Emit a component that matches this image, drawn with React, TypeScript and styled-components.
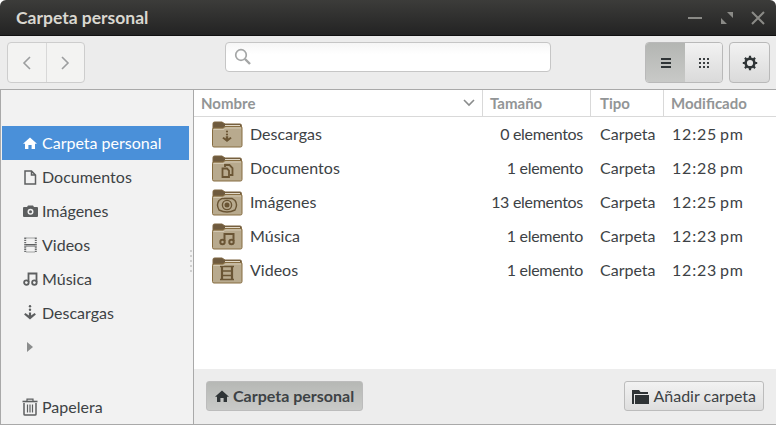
import React from "react";
import styled, { createGlobalStyle } from "styled-components";

const GlobalStyle = createGlobalStyle`
  html, body {
    margin: 0;
    padding: 0;
    background: #ffffff;
  }
  * {
    box-sizing: border-box;
  }
`;

const FolderBadge = ({ kind }: { kind: string }) => {
  const c = "#6a5534";
  return (
    <svg width="32" height="28" viewBox="0 0 32 28">
      <path d="M2 3.5 Q2 2 3.5 2 H11 L14 4 H29 Q30.5 4 30.5 5.5 V12 H2Z" fill="#6e5a3e" stroke="#7d6540" />
      <rect x="14" y="5" width="15" height="2" fill="#e2d9c8" />
      <path d="M1.5 9.5 Q1.5 8 3 8 H12 L14 6.5 H30 Q31 6.5 31 8 V25.5 Q31 27 29.5 27 H3 Q1.5 27 1.5 25.5Z" fill="#b8aa8e" stroke="#866c40" />
      <path d="M2.5 9.5 H13 L14.5 8 H30" fill="none" stroke="#d3c8b2" />
      {kind === "download" && (
        <g fill={c}>
          <circle cx="16" cy="11.5" r="1.1" />
          <circle cx="16" cy="14.5" r="1.1" />
          <path d="M14.8 16.3h2.4v2.2l2.2-1.6 1.3 1.3-4.7 3.8-4.7-3.8 1.3-1.3 2.2 1.6z" />
        </g>
      )}
      {kind === "doc" && (
        <g fill="none" stroke={c} strokeWidth="1.8">
          <path d="M14 13V11H18.5L21.5 14V21H19" />
          <path d="M11.5 14.5H16L18 16.5V23H11.5Z" />
        </g>
      )}
      {kind === "photo" && (
        <g fill="none" stroke={c} strokeWidth="1.4">
          <path d="M8 12.5 L11 10.5 H21 L24 12.5 Q27 16.5 24 22 Q16 26 8 22 Q5 16.5 8 12.5Z" />
          <circle cx="16" cy="17" r="4.6" />
          <circle cx="16" cy="17" r="1.8" fill={c} />
        </g>
      )}
      {kind === "music" && (
        <g fill="none" stroke={c} strokeWidth="2">
          <path d="M13.5 19V12H22.5V19" />
          <circle cx="11.5" cy="20" r="2.2" />
          <circle cx="20.5" cy="20" r="2.2" />
        </g>
      )}
      {kind === "video" && (
        <g fill="none" stroke={c}>
          <path d="M11 10V24M21 10V24" strokeWidth="2.2" />
          <path d="M9 10.5H23M9 23.5H23M11 15H21M11 19.5H21" strokeWidth="1.5" />
        </g>
      )}
    </svg>
  );
};

const HomeIcon = ({ color }: { color: string }) => (
  <svg width="14" height="14" viewBox="0 0 14 14">
    <path d="M7 1.5 L14 7.8 H12 V13 H8.6 V9 H5.4 V13 H2 V7.8 H0 Z" fill={color} />
  </svg>
);

const sideIcons: Record<string, React.ReactNode> = {
  home: <HomeIcon color="#ffffff" />,
  doc: (
    <svg width="14" height="15" viewBox="0 0 14 15">
      <path d="M2 1H8.5L12.5 5V14H2Z M8.5 1V5H12.5" fill="none" stroke="#5d5f60" strokeWidth="1.5" />
    </svg>
  ),
  photo: (
    <svg width="15" height="14" viewBox="0 0 15 14">
      <path fillRule="evenodd" d="M1 3H4L5 1.5H10L11 3H14Q15 3 15 4V12Q15 13 14 13H1Q0 13 0 12V4Q0 3 1 3Z M7.5 4.8A3 3 0 1 0 7.5 10.8A3 3 0 1 0 7.5 4.8Z" fill="#5d5f60" />
      <circle cx="7.5" cy="7.8" r="1.5" fill="#5d5f60" />
    </svg>
  ),
  video: (
    <svg width="15" height="16" viewBox="0 0 15 16">
      <path d="M3 7.5H12M3 9H12" fill="none" stroke="#5d5f60" strokeWidth="1" />
      <path d="M3 1H12M3 15H12" fill="none" stroke="#a0a2a2" strokeWidth="1" />
      <path d="M2.2 0.5V15.5M12.8 0.5V15.5" fill="none" stroke="#6b6d6e" strokeWidth="2" strokeDasharray="1.4 0.8" />
    </svg>
  ),
  music: (
    <svg width="15" height="14" viewBox="0 0 15 14">
      <g fill="none" stroke="#5d5f60" strokeWidth="1.8">
        <path d="M5.5 10V1.5H13.5V10" />
        <circle cx="3.4" cy="10.6" r="2.3" />
        <circle cx="11.4" cy="10.6" r="2.3" />
      </g>
    </svg>
  ),
  download: (
    <svg width="14" height="16" viewBox="0 0 14 16">
      <g fill="#5d5f60">
        <circle cx="7" cy="1.3" r="1.2" />
        <circle cx="7" cy="4.8" r="1.2" />
        <path d="M5.9 7.4H8.1V10.6L11.6 8 12.9 9.4 7 14.6 1.1 9.4 2.4 8 5.9 10.6Z" />
      </g>
    </svg>
  ),
  trash: (
    <svg width="16" height="18" viewBox="0 0 16 18">
      <g fill="none" stroke="#5d5f60">
        <path d="M0.5 3.5H15.5" strokeWidth="1.6" />
        <path d="M5 3V1.2H11V3" strokeWidth="1.2" />
        <path d="M2 5V16.2Q2 17 3 17H13Q14 17 14 16.2V5" strokeWidth="1.5" />
        <path d="M5.5 6.5V14.5M8 6.5V14.5M10.5 6.5V14.5" strokeWidth="1.2" />
      </g>
    </svg>
  ),
};

const places = [
  { icon: "home", label: "Carpeta personal", active: true },
  { icon: "doc", label: "Documentos" },
  { icon: "photo", label: "Imágenes" },
  { icon: "video", label: "Videos" },
  { icon: "music", label: "Música" },
  { icon: "download", label: "Descargas" },
];

const files = [
  { icon: "download", name: "Descargas", size: "0 elementos", time: "12:25 pm" },
  { icon: "doc", name: "Documentos", size: "1 elemento", time: "12:28 pm" },
  { icon: "photo", name: "Imágenes", size: "13 elementos", time: "12:25 pm" },
  { icon: "music", name: "Música", size: "1 elemento", time: "12:23 pm" },
  { icon: "video", name: "Videos", size: "1 elemento", time: "12:23 pm" },
];

const App = () => {
  return (
    <Win>
      <GlobalStyle />
      <TitleBar>
        <Title>Carpeta personal</Title>
        <WinButtons>
          <svg width="16" height="16" viewBox="0 0 16 16">
            <rect x="1" y="7" width="14" height="2" fill="#8a8a86" />
          </svg>
          <svg width="14" height="14" viewBox="0 0 14 14">
            <path d="M7 1H13V7ZM1 7L7 13H1Z" fill="#8a8a86" />
          </svg>
          <svg width="14" height="14" viewBox="0 0 14 14">
            <path d="M1 1L13 13M13 1L1 13" stroke="#8a8a86" strokeWidth="2" />
          </svg>
        </WinButtons>
      </TitleBar>

      <ToolBar>
        <NavGroup>
          <NavButton>
            <svg width="10" height="14" viewBox="0 0 10 14">
              <path d="M8 1L2 7L8 13" fill="none" stroke="#9c9e9f" strokeWidth="1.6" />
            </svg>
          </NavButton>
          <NavButton>
            <svg width="10" height="14" viewBox="0 0 10 14">
              <path d="M2 1L8 7L2 13" fill="none" stroke="#9c9e9f" strokeWidth="1.6" />
            </svg>
          </NavButton>
        </NavGroup>
        <SearchBox>
          <svg width="18" height="18" viewBox="0 0 18 18">
            <circle cx="7" cy="7" r="5.3" fill="none" stroke="#a4a6a6" strokeWidth="1.7" />
            <path d="M11 11L16 16" stroke="#a4a6a6" strokeWidth="2.4" />
          </svg>
        </SearchBox>
        <ViewGroup>
          <ViewButton $on>
            <svg width="10" height="10" viewBox="0 0 10 10">
              <path d="M0 0H10V2H0ZM0 4H10V6H0ZM0 8H10V10H0Z" fill="#2f3436" />
            </svg>
          </ViewButton>
          <ViewButton>
            <svg width="10" height="10" viewBox="0 0 10 10" fill="#3b3f41">
              <path d="M0 0h2v2H0zM4 0h2v2H4zM8 0h2v2H8zM0 4h2v2H0zM4 4h2v2H4zM8 4h2v2H8zM0 8h2v2H0zM4 8h2v2H4zM8 8h2v2H8z" />
            </svg>
          </ViewButton>
        </ViewGroup>
        <GearButton>
          <svg width="16" height="16" viewBox="0 0 16 16">
            <circle cx="8" cy="8" r="4.4" fill="none" stroke="#2f3436" strokeWidth="2.6" />
            <path d="M8 0.8V3M8 13V15.2M0.8 8H3M13 8H15.2M2.9 2.9L4.5 4.5M11.5 11.5L13.1 13.1M13.1 2.9L11.5 4.5M4.5 11.5L2.9 13.1" stroke="#2f3436" strokeWidth="2.2" />
          </svg>
        </GearButton>
      </ToolBar>

      <Body>
        <Sidebar>
          {places.map((p) => (
            <Place key={p.label} $active={p.active}>
              <PlaceIcon>{sideIcons[p.icon]}</PlaceIcon>
              <Label>{p.label}</Label>
            </Place>
          ))}
          <Expander>
            <svg width="6" height="10" viewBox="0 0 6 10">
              <path d="M0 0L6 5L0 10Z" fill="#8b8d8d" />
            </svg>
          </Expander>
          <Trash>
            <PlaceIcon>{sideIcons.trash}</PlaceIcon>
            <Label>Papelera</Label>
          </Trash>
          <Grip />
        </Sidebar>

        <Main>
          <HeaderRow>
            <HeadCell>
              Nombre
              <svg width="12" height="8" viewBox="0 0 12 8">
                <path d="M1 1L6 6L11 1" fill="none" stroke="#8a8c8c" strokeWidth="1.6" />
              </svg>
            </HeadCell>
            <HeadCell>Tamaño</HeadCell>
            <HeadCell $inset={9}>Tipo</HeadCell>
            <HeadCell>Modificado</HeadCell>
          </HeaderRow>
          <FileList>
            {files.map((f) => (
              <FileRow key={f.name}>
                <NameCell>
                  <FolderBadge kind={f.icon} />
                  <Label>{f.name}</Label>
                </NameCell>
                <SizeCell>{f.size}</SizeCell>
                <TypeCell>Carpeta</TypeCell>
                <TimeCell>{f.time}</TimeCell>
              </FileRow>
            ))}
          </FileList>
          <Footer>
            <FooterButton $pressed>
              <HomeIcon color="#2f3436" />
              <Label>Carpeta personal</Label>
            </FooterButton>
            <FooterButton>
              <svg width="17" height="15" viewBox="0 0 17 15">
                <path d="M0 1H7L8.5 3H16V5H2V15H0Z M3 6H17V15H3Z" fill="#2f3436" />
              </svg>
              <Label>Añadir carpeta</Label>
            </FooterButton>
          </Footer>
        </Main>
      </Body>
    </Win>
  );
};

export default App;

const Win = styled.div`
  width: 776px;
  height: 425px;
  display: flex;
  flex-direction: column;
  overflow: hidden;
  font-family: "Lato", "Liberation Sans", sans-serif;
  font-size: 16px;
  color: #3d4245;
  background: #ffffff;
  border-radius: 6px 6px 0 0;
`;

const Label = styled.span`
  margin-bottom: 2px;
`;

const TitleBar = styled.div`
  height: 36px;
  flex: none;
  display: flex;
  align-items: center;
  justify-content: space-between;
  padding: 0 11px 0 16px;
  background: linear-gradient(#3c3c3a, #232323);
  border-bottom: 1px solid #111111;
`;

const Title = styled.div`
  font-size: 17.5px;
  font-weight: 700;
  color: #d9d7d0;
`;

const WinButtons = styled.div`
  display: flex;
  align-items: center;
  gap: 17px;
`;

const ToolBar = styled.div`
  height: 54px;
  flex: none;
  display: flex;
  align-items: flex-start;
  padding: 6px 6px 0 7px;
  background: #ececec;
  border-bottom: 1px solid #a9a9a9;
`;

const NavGroup = styled.div`
  width: 78px;
  height: 41px;
  display: flex;
  border: 1px solid #cdcdcd;
  border-radius: 4px;
  background: #f3f3f2;
`;

const NavButton = styled.div`
  flex: 1;
  display: flex;
  align-items: center;
  justify-content: center;
  & + & {
    border-left: 1px solid #d8d8d8;
  }
`;

const SearchBox = styled.div`
  width: 326px;
  height: 30px;
  margin-left: 140px;
  display: flex;
  align-items: center;
  padding-left: 8px;
  background: linear-gradient(#f6f6f6, #ffffff 40%);
  border: 1px solid #c6c6c6;
  border-radius: 4px;
`;

const ViewGroup = styled.div`
  width: 78px;
  height: 41px;
  margin-left: 94px;
  display: flex;
  border: 1px solid #b9b9b9;
  border-radius: 4px;
  overflow: hidden;
`;

const ViewButton = styled.div<{ $on?: boolean }>`
  flex: none;
  width: ${({ $on }) => ($on ? "39px" : "38px")};
  display: flex;
  align-items: center;
  justify-content: center;
  background: ${({ $on }) =>
    $on ? "linear-gradient(#b4b6b3, #c8c9c7)" : "linear-gradient(#f2f2f2, #dadada)"};
`;

const GearButton = styled.div`
  width: 41px;
  height: 41px;
  margin-left: 6px;
  display: flex;
  align-items: center;
  justify-content: center;
  border: 1px solid #b9b9b9;
  border-radius: 4px;
  background: linear-gradient(#f2f2f2, #dadada);
`;

const Body = styled.div`
  flex: 1;
  display: flex;
  min-height: 0;
`;

const Sidebar = styled.div`
  position: relative;
  width: 194px;
  flex: none;
  display: flex;
  flex-direction: column;
  padding: 36px 4px 0 1px;
  background: #f2f2f2;
  border-left: 1px solid #a9a9a9;
  border-right: 1px solid #a9a9a9;
  border-bottom: 1px solid #a9a9a9;
`;

const Place = styled.div<{ $active?: boolean }>`
  height: 34px;
  flex: none;
  display: flex;
  align-items: center;
  padding-left: 20px;
  color: ${({ $active }) => ($active ? "#ffffff" : "#3d4245")};
  background: ${({ $active }) => ($active ? "#4a90d9" : "transparent")};
`;

const PlaceIcon = styled.span`
  width: 16px;
  margin-right: 4px;
  display: flex;
  justify-content: center;
`;

const Expander = styled.div`
  height: 34px;
  flex: none;
  display: flex;
  align-items: center;
  padding-left: 25px;
`;

const Trash = styled(Place)`
  margin-top: auto;
`;

const Grip = styled.div`
  position: absolute;
  right: 1px;
  top: 160px;
  width: 2px;
  height: 25px;
  background: repeating-linear-gradient(#cfcfcf 0 2px, transparent 2px 5px);
`;

const Main = styled.div`
  flex: 1;
  min-width: 0;
  display: flex;
  flex-direction: column;
`;

const HeaderRow = styled.div`
  height: 27px;
  flex: none;
  display: grid;
  grid-template-columns: 289px 108px 73px 1fr;
  border-bottom: 1px solid #d9d9d9;
  color: #929596;
`;

const HeadCell = styled.div<{ $inset?: number }>`
  display: flex;
  align-items: center;
  justify-content: space-between;
  padding: 0 7px 0 ${({ $inset }) => $inset ?? 7}px;
  border-right: 1px solid #d9d9d9;
  font-size: 15px;
  font-weight: 700;
  &:last-child {
    border-right: none;
  }
`;

const FileList = styled.div`
  flex: 1;
  background: #ffffff;
`;

const FileRow = styled.div`
  height: 34px;
  display: grid;
  grid-template-columns: 200px 189px 89px 1fr;
  align-items: center;
`;

const NameCell = styled.div`
  display: flex;
  align-items: center;
  gap: 7px;
  padding-left: 17px;
`;

const SizeCell = styled.span`
  margin-bottom: 2px;
  text-align: right;
  letter-spacing: -0.3px;
`;

const TypeCell = styled.span`
  margin-bottom: 2px;
  padding-left: 17px;
`;

const TimeCell = styled.span`
  margin-bottom: 2px;
  letter-spacing: 0.8px;
  word-spacing: -2px;
`;

const Footer = styled.div`
  height: 56px;
  flex: none;
  display: flex;
  align-items: flex-start;
  justify-content: space-between;
  padding: 12px 12px 0 12px;
  background: #ededed;
  border-bottom: 1px solid #a9a9a9;
`;

const FooterButton = styled.div<{ $pressed?: boolean }>`
  height: 30px;
  display: flex;
  align-items: center;
  gap: 4px;
  padding: 0 ${({ $pressed }) => ($pressed ? "8px" : "7px")};
  border: 1px solid #bcbcbc;
  border-radius: 3px;
  font-weight: ${({ $pressed }) => ($pressed ? 700 : 400)};
  background: ${({ $pressed }) =>
    $pressed ? "linear-gradient(#b6b8b5, #c9cac8)" : "linear-gradient(#f2f2f2, #dedede)"};
`;
